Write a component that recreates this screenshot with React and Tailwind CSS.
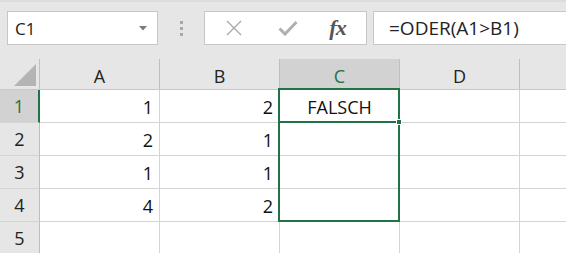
import React from 'react';

const cols = ['A', 'B', 'C', 'D'];

const rows = [
  { n: 1, a: '1', b: '2', c: 'FALSCH' },
  { n: 2, a: '2', b: '1', c: '' },
  { n: 3, a: '1', b: '1', c: '' },
  { n: 4, a: '4', b: '2', c: '' },
  { n: 5, a: '', b: '', c: '' },
];

const font = { fontFamily: '"Open Sans", "Noto Sans", sans-serif' };

const App = () => {
  return (
    <div className="w-[566px] h-[253px] overflow-hidden bg-white relative" style={font}>
      {/* formula bar */}
      <div className="h-[59px] bg-[#e6e6e6] border-t-2 border-[#dcdcdc] flex items-start pt-[9px]">
        <div className="ml-[7px] w-[151px] h-[34px] bg-white border border-[#c6c6c6] flex items-center justify-between pl-[7px] pr-[10px]">
          <span className="text-[17px] text-[#222] leading-none">C1</span>
          <svg width="8" height="5" viewBox="0 0 8 5"><path d="M0 0h8L4 4.5z" fill="#7a7a7a" /></svg>
        </div>
        <div className="w-[46px] h-[34px] flex flex-col items-center justify-center gap-[3px]">
          <span className="w-[3px] h-[3px] bg-[#a8a8a8]" />
          <span className="w-[3px] h-[3px] bg-[#a8a8a8]" />
          <span className="w-[3px] h-[3px] bg-[#a8a8a8]" />
        </div>
        <div className="w-[163px] h-[34px] bg-white border border-[#c6c6c6] flex items-center">
          <div className="w-[58px] flex justify-center">
            <svg width="16" height="16" viewBox="0 0 16 16"><path d="M1 1l14 14M15 1L1 15" stroke="#a9a9a9" strokeWidth="1.4" fill="none" /></svg>
          </div>
          <div className="w-[50px] flex justify-center">
            <svg width="20" height="16" viewBox="0 0 20 16"><path d="M1.5 8.5l5.5 5.5L18.5 2" stroke="#b0b0b0" strokeWidth="3" fill="none" /></svg>
          </div>
          <div className="flex-1 flex justify-center pr-[4px]">
            <span className="text-[22px] italic font-semibold text-[#555] leading-none tracking-[-1px]" style={{ fontFamily: '"Liberation Serif", serif' }}>fx</span>
          </div>
        </div>
        <div className="ml-[6px] flex-1 h-[34px] bg-white border border-[#c6c6c6] border-r-0 flex items-center pl-[15px]">
          <span className="text-[19px] text-[#222] leading-none">=ODER(A1&gt;B1)</span>
        </div>
      </div>

      {/* column headers */}
      <div className="flex h-[31px] bg-[#e6e6e6] border-b border-[#c8c8c8]">
        <div className="w-[40px] shrink-0 border-r border-[#c0c0c0] flex items-end justify-end pr-[3px] pb-[3px]">
          <svg width="22" height="22" viewBox="0 0 22 22"><path d="M22 0V22H0z" fill="#b4b4b4" /></svg>
        </div>
        {cols.map(c => (
          <div
            key={c}
            className={`w-[120px] shrink-0 border-r border-[#c0c0c0] flex items-end justify-center pb-[3px] text-[18px] leading-none h-full ${c === 'C' ? 'bg-[#d2d2d2] text-[#217346] pt-[2px]' : 'text-[#222]'}`}
          >
            <span className="pb-[1px]">{c}</span>
          </div>
        ))}
        <div className="flex-1" />
      </div>

      {/* rows */}
      {rows.map(r => (
        <div key={r.n} className="flex h-[33px]">
          <div className={`w-[40px] shrink-0 border-b border-[#d4d4d4] flex items-center justify-center text-[18px] ${r.n === 1 ? 'bg-[#d2d2d2] text-[#217346] border-r-2 border-r-[#217346]' : 'bg-[#e6e6e6] text-[#222] border-r border-r-[#bdbdbd]'}`}>
            {r.n}
          </div>
          <div className="w-[120px] shrink-0 border-r border-b border-[#d4d4d4] flex items-center justify-end pr-[6px] pt-[3px] text-[18px] text-[#111]">{r.a}</div>
          <div className="w-[120px] shrink-0 border-r border-b border-[#d4d4d4] flex items-center justify-end pr-[6px] pt-[3px] text-[18px] text-[#111]">{r.b}</div>
          <div className="w-[120px] shrink-0 border-r border-b border-[#d4d4d4] flex items-center justify-center pt-[3px] text-[18px] text-[#111]">{r.c}</div>
          <div className="w-[120px] shrink-0 border-r border-b border-[#d4d4d4]" />
          <div className="flex-1 border-b border-[#d4d4d4]" />
        </div>
      ))}

      {/* selection */}
      <div className="absolute left-[278px] top-[88px] w-[122px] h-[134px] border-[2.5px] border-[#217346] pointer-events-none" />
      <div className="absolute left-[278px] top-[121px] w-[122px] h-[2px] bg-[#217346]" />
      <div className="absolute left-[396px] top-[119px] w-[6px] h-[6px] bg-[#217346] border border-white" />
    </div>
  );
};

export default App;
